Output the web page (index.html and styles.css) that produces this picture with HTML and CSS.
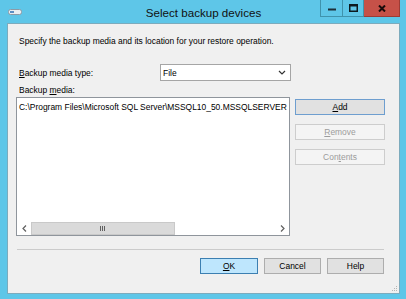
FILE: index.html
```html
<!DOCTYPE html>
<html lang="en">
<head>
  <meta charset="UTF-8">
  <title>Select backup devices</title>
  <link rel="stylesheet" href="styles.css">
</head>
<body>
  <div class="window">
    <div class="titlebar">
      <div class="app-icon">
        <svg width="14" height="6" viewBox="0 0 14 6">
          <rect x="0.5" y="0.5" width="13" height="5" rx="2" fill="#e9eef2" stroke="#8c9aa6"/>
          <rect x="2" y="2" width="4" height="2" fill="#5b8fc4"/>
        </svg>
      </div>
      <div class="title">Select backup devices</div>
      <div class="controls">
        <span class="ctl min">
          <svg width="8" height="3" viewBox="0 0 8 3"><rect x="0" y="0.5" width="8" height="2" fill="#1d2f38"/></svg>
        </span>
        <span class="ctl max">
          <svg width="9" height="8" viewBox="0 0 9 8"><rect x="0.75" y="1.25" width="7.5" height="6" fill="none" stroke="#0d1a20" stroke-width="1.5"/><rect x="0" y="0" width="9" height="2.5" fill="#0d1a20"/></svg>
        </span>
        <span class="ctl close">
          <svg width="8" height="7" viewBox="0 0 8 7"><path d="M1 0.5 L7 6.5 M7 0.5 L1 6.5" stroke="#1a0b0a" stroke-width="2"/></svg>
        </span>
      </div>
    </div>

    <div class="client">
      <p class="intro">Specify the backup media and its location for your restore operation.</p>

      <div class="type-row">
        <label class="field-label"><u>B</u>ackup media type:</label>
        <div class="combo">
          <span>File</span>
          <svg width="8" height="5" viewBox="0 0 8 5"><path d="M1 1 L4 4 L7 1" fill="none" stroke="#333" stroke-width="1.2"/></svg>
        </div>
      </div>

      <div class="media-label">Backup <u>m</u>edia:</div>
      <div class="media-row">
        <div class="listbox">
          <div class="items">
            <div class="item">C:\Program Files\Microsoft SQL Server\MSSQL10_50.MSSQLSERVER</div>
          </div>
          <div class="hscroll">
            <span class="arrow">
              <svg width="5" height="7" viewBox="0 0 5 7"><path d="M4 0.5 L1 3.5 L4 6.5" fill="none" stroke="#606060" stroke-width="1.2"/></svg>
            </span>
            <div class="track">
              <span class="thumb">
                <svg width="6" height="5" viewBox="0 0 6 5"><path d="M0.5 0 V5 M2.5 0 V5 M4.5 0 V5" stroke="#606060" stroke-width="1"/></svg>
              </span>
            </div>
            <span class="arrow">
              <svg width="5" height="7" viewBox="0 0 5 7"><path d="M1 0.5 L4 3.5 L1 6.5" fill="none" stroke="#606060" stroke-width="1.2"/></svg>
            </span>
          </div>
        </div>
        <div class="side-buttons">
          <button class="btn focused"><u>A</u>dd</button>
          <button class="btn" disabled><u>R</u>emove</button>
          <button class="btn" disabled>Con<u>t</u>ents</button>
        </div>
      </div>

      <div class="separator"></div>

      <div class="dialog-buttons">
        <button class="btn default ok"><u>O</u>K</button>
        <button class="btn">Cancel</button>
        <button class="btn">Help</button>
      </div>

      <svg class="size-grip" width="7" height="7" viewBox="0 0 7 7">
        <rect x="5" y="1" width="1" height="1" fill="#b5b5b5"/>
        <rect x="3" y="3" width="1" height="1" fill="#b5b5b5"/>
        <rect x="5" y="3" width="1" height="1" fill="#b5b5b5"/>
        <rect x="1" y="5" width="1" height="1" fill="#b5b5b5"/>
        <rect x="3" y="5" width="1" height="1" fill="#b5b5b5"/>
        <rect x="5" y="5" width="1" height="1" fill="#b5b5b5"/>
      </svg>
    </div>
  </div>
</body>
</html>
```

FILE: styles.css
```css
body {
  margin: 0;
  font-family: "Liberation Sans", Arial, sans-serif;
  font-size: 8.45px;
  color: #000;
  background: #5ec6e8;
}
.window {
  width: 406px;
  height: 299px;
  box-sizing: border-box;
  padding: 0 6px 5px 7px;
  background: #5ec6e8;
  display: flex;
  flex-direction: column;
}
.titlebar {
  height: 23px;
  display: grid;
  grid-template-columns: 1fr auto 1fr;
  flex-shrink: 0;
}
.app-icon {
  justify-self: start;
  margin: 9px 0 0 1px;
  line-height: 0;
}
.title {
  font-size: 11.6px;
  line-height: 23px;
  padding-top: 1px;
  color: #111;
  white-space: nowrap;
}
.controls {
  justify-self: end;
  display: flex;
  height: 17px;
}
.ctl {
  display: flex;
  align-items: center;
  justify-content: center;
  box-sizing: border-box;
  height: 17px;
  border: 1px solid #3f93ad;
  border-top: none;
}
.ctl.min {
  width: 23px;
  padding-top: 3px;
}
.ctl.max {
  width: 21px;
  border-left: none;
}
.ctl.close {
  width: 36px;
  background: #c65148;
  border-color: #9c3b35;
  border-left: none;
}
.client {
  flex: 1;
  position: relative;
  background: #f0f0f0;
  border: 1px solid #7cabbd;
  padding: 0 14px 0 8px;
  display: flex;
  flex-direction: column;
}
.intro {
  margin: 12px 0 0 3px;
  line-height: 10px;
}
.type-row {
  display: flex;
  align-items: center;
  margin-top: 18px;
}
.field-label {
  width: 141px;
  padding-left: 3px;
  line-height: 10px;
}
.combo {
  width: 131px;
  height: 17px;
  box-sizing: border-box;
  background: #fff;
  border: 1px solid #a5a5a5;
  display: flex;
  align-items: center;
  justify-content: space-between;
  padding: 0 4px 0 2px;
}
.media-label {
  margin: 4px 0 0 3px;
  line-height: 10px;
}
.media-row {
  display: flex;
  margin-top: 2px;
}
.listbox {
  width: 274px;
  height: 139px;
  box-sizing: border-box;
  border: 1px solid #8f959c;
  background: #fff;
  display: flex;
  flex-direction: column;
}
.items {
  flex: 1;
  overflow: hidden;
  padding: 4px 0 0 2px;
}
.item {
  white-space: nowrap;
  line-height: 10px;
}
.hscroll {
  height: 13px;
  display: flex;
  background: #fff;
}
.arrow {
  width: 14px;
  display: flex;
  align-items: center;
  justify-content: center;
  background: #fff;
}
.track {
  flex: 1;
  display: flex;
}
.thumb {
  width: 144px;
  box-sizing: border-box;
  background: #dadada;
  border: 1px solid #c9c9c9;
  display: flex;
  align-items: center;
  justify-content: center;
}
.side-buttons {
  width: 90px;
  margin-left: 5px;
  padding-top: 2px;
  display: flex;
  flex-direction: column;
  gap: 9px;
}
.btn {
  height: 16px;
  box-sizing: border-box;
  padding: 0;
  font-family: inherit;
  font-size: 8.45px;
  color: #000;
  background: #e1e1e1;
  border: 1px solid #adadad;
  line-height: 14px;
}
.btn.focused {
  border-color: #6e9ecf;
}
.btn:disabled {
  color: #9c9c9c;
  background: #f4f4f4;
  border-color: #cdcdcd;
}
.separator {
  height: 1px;
  margin: 13px 1px 0 1px;
  background: #cbcbcb;
}
.dialog-buttons {
  display: flex;
  justify-content: flex-end;
  gap: 6px;
  margin: 8px 1px 0 0;
}
.dialog-buttons .btn {
  width: 57px;
}
.dialog-buttons .btn.ok {
  width: 58px;
}
.btn.default {
  background: #bee6fd;
  border-color: #3c7fb1;
}
.size-grip {
  position: absolute;
  right: 1px;
  bottom: 1px;
}
```
